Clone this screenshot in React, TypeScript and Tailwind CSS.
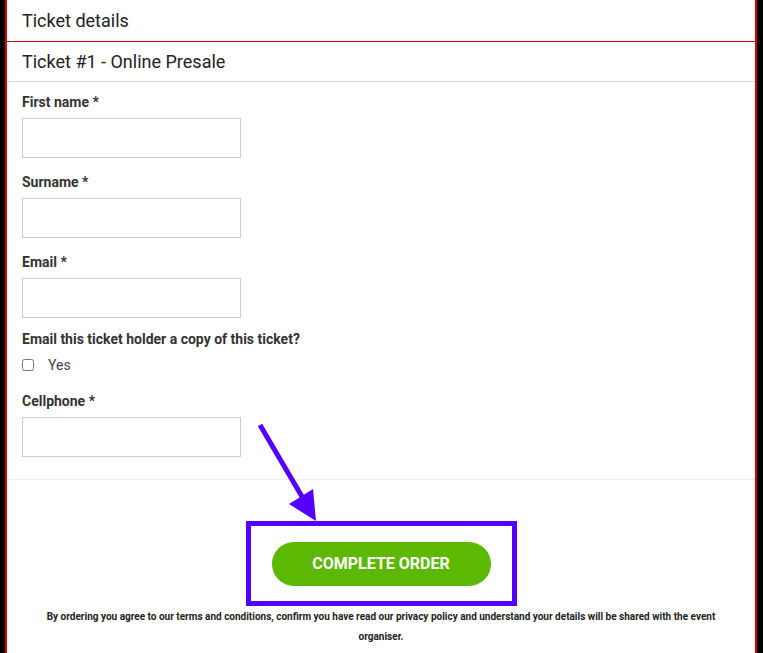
import React from 'react'

const fields = [
  { label: 'First name *', mt: 'pt-[10px]' },
  { label: 'Surname *', mt: 'pt-[14px]' },
  { label: 'Email *', mt: 'pt-[14px]' },
]

function Field({ label, className }: { label: string; className?: string }) {
  return (
    <div className={className}>
      <label className="block text-[14px] leading-[20px] font-bold text-[#333]">{label}</label>
      <input
        type="text"
        className="mt-[6px] block w-[219px] h-[40px] border border-[#cccccc] bg-white px-2 outline-none"
      />
    </div>
  )
}

export default function App() {
  return (
    <div
      className="relative flex h-[653px] w-[763px] overflow-hidden bg-black"
      style={{ fontFamily: 'Roboto, "Liberation Sans", sans-serif' }}
    >
      <div className="w-[5px] shrink-0 bg-black" />
      <div className="flex-1 bg-white border-l-2 border-r-2 border-[#e00000]">
        <div className="h-[42px] border-b border-[#e00000] pl-[15px] flex items-center">
          <h2 className="text-[18px] text-[#222]">Ticket details</h2>
        </div>
        <div className="h-[40px] border-b border-[#d6d6d6] pl-[15px] flex items-center">
          <h3 className="text-[18px] text-[#222]">Ticket #1 - Online Presale</h3>
        </div>

        <form className="pl-[15px] pb-[22px] border-b border-[#ececec]">
          {fields.map((f) => (
            <Field key={f.label} label={f.label} className={f.mt} />
          ))}
          <div className="pt-[11px]">
            <p className="text-[14px] leading-[20px] font-bold text-[#333]">
              Email this ticket holder a copy of this ticket?
            </p>
            <label className="mt-[6px] flex items-center h-[20px]">
              <input type="checkbox" className="w-[12px] h-[12px] accent-gray-500" />
              <span className="ml-[14px] text-[14px] text-[#444]">Yes</span>
            </label>
          </div>
          <Field label="Cellphone *" className="pt-[16px]" />
        </form>

        <div className="pt-[41px] flex flex-col items-center">
          <div className="border-[5px] border-[#5500ff] px-[21px] pt-[16px] pb-[15px]">
            <button
              type="button"
              className="w-[219px] h-[44px] rounded-full bg-[#5cb800] text-white text-[16px] font-bold"
            >
              COMPLETE ORDER
            </button>
          </div>
          <p className="mt-[1px] w-[700px] text-center text-[10px] leading-[20px] font-bold text-[#222]">
            By ordering you agree to our terms and conditions, confirm you have read our privacy policy and understand your details will be shared with the event organiser.
          </p>
        </div>
      </div>
      <div className="w-[6px] shrink-0 bg-black" />

      <svg
        className="pointer-events-none absolute left-0 top-0"
        width="763"
        height="653"
        viewBox="0 0 763 653"
      >
        <line x1="260" y1="425" x2="304" y2="500" stroke="#5500ff" strokeWidth="5" />
        <polygon points="289,504 313,489 316,521" fill="#5500ff" />
      </svg>
    </div>
  )
}
